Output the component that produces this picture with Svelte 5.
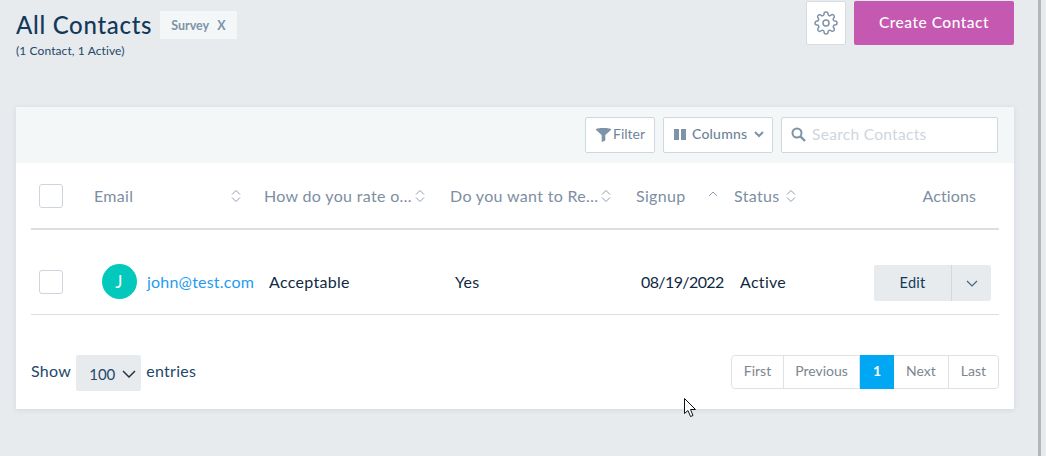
<script>
  const sortCols = [
    { label: 'Email', cls: 'c-email' },
    { label: 'How do you rate o…', cls: 'c-q' },
    { label: 'Do you want to Re…', cls: 'c-q' }
  ];
</script>

{#snippet sort()}
  <svg class="sort" width="10" height="14" viewBox="0 0 10 14" fill="none" stroke="#8e9db0" stroke-width="1">
    <path d="M1 5.500 5 1.500l4 4M1 8.500l4 4 4-4" />
  </svg>
{/snippet}

<div class="page">
  <main class="main">
    <header class="head">
      <div class="title-block">
        <div class="title-row">
          <h1>All Contacts</h1>
          <span class="tag"><span>Survey</span><span>X</span></span>
        </div>
        <p class="count">(1 Contact, 1 Active)</p>
      </div>
      <div class="head-actions">
        <button class="gear" aria-label="Settings">
          <svg width="24" height="24" viewBox="0 0 24 24" fill="none" stroke="#7d93a8" stroke-width="1.500" stroke-linejoin="round">
            <circle cx="12" cy="12" r="3" />
            <path d="M19.400 15a1.650 1.650 0 0 0 .33 1.820l.06.06a2 2 0 0 1 0 2.830 2 2 0 0 1-2.830 0l-.06-.06a1.650 1.650 0 0 0-1.820-.33 1.650 1.650 0 0 0-1 1.510V21a2 2 0 0 1-2 2 2 2 0 0 1-2-2v-.09A1.650 1.650 0 0 0 9 19.400a1.650 1.650 0 0 0-1.820.33l-.06.06a2 2 0 0 1-2.830 0 2 2 0 0 1 0-2.830l.06-.06a1.650 1.650 0 0 0 .33-1.820 1.650 1.650 0 0 0-1.510-1H3a2 2 0 0 1-2-2 2 2 0 0 1 2-2h.09A1.650 1.650 0 0 0 4.600 9a1.650 1.650 0 0 0-.33-1.820l-.06-.06a2 2 0 0 1 0-2.830 2 2 0 0 1 2.830 0l.06.06a1.650 1.650 0 0 0 1.820.33H9a1.650 1.650 0 0 0 1-1.510V3a2 2 0 0 1 2-2 2 2 0 0 1 2 2v.09a1.650 1.650 0 0 0 1 1.510 1.650 1.650 0 0 0 1.820-.33l.06-.06a2 2 0 0 1 2.830 0 2 2 0 0 1 0 2.830l-.06.06a1.650 1.650 0 0 0-.33 1.820V9a1.650 1.650 0 0 0 1.510 1H21a2 2 0 0 1 2 2 2 2 0 0 1-2 2h-.09a1.650 1.650 0 0 0-1.510 1z" />
          </svg>
        </button>
        <button class="create">Create Contact</button>
      </div>
    </header>

    <section class="card">
      <div class="toolbar">
        <button class="tool filter">
          <svg width="15" height="14" viewBox="0 0 15 14" fill="#7d93a8"><path d="M0 1.500C0 .5 3 0 7.500 0S15 .5 15 1.500c0 .6-.6 1-1.200 1.400L9.300 7v5.500L5.700 14V7L1.200 2.900C.6 2.500 0 2.100 0 1.500z"/></svg>
          <span>Filter</span>
        </button>
        <button class="tool columns">
          <svg width="12" height="11" viewBox="0 0 12 11" fill="#7d93a8"><rect width="5" height="11"/><rect x="7" width="5" height="11"/></svg>
          <span>Columns</span>
          <svg width="10" height="7" viewBox="0 0 10 7" fill="none" stroke="#7d93a8" stroke-width="2"><path d="M1 1l4 4 4-4"/></svg>
        </button>
        <label class="search">
          <svg width="15" height="15" viewBox="0 0 15 15" fill="none" stroke="#7d93a8" stroke-width="2"><circle cx="6" cy="6" r="4.500"/><path d="M9.500 9.500 14 14" stroke-width="2.400"/></svg>
          <input placeholder="Search Contacts" />
        </label>
      </div>

      <div class="table">
        <div class="row header">
          <div class="cell check-cell"><span class="check"></span></div>
          {#each sortCols as c}
            <div class="cell th {c.cls}"><span class="th-label">{c.label}</span>{@render sort()}</div>
          {/each}
          <div class="cell th c-signup">
            <span class="th-label">Signup</span>
            <svg class="sort" width="10" height="6" viewBox="0 0 10 6" fill="none" stroke="#8e9db0"><path d="M1 5 5 1l4 4"/></svg>
          </div>
          <div class="cell th c-status"><span class="th-label">Status</span>{@render sort()}</div>
          <div class="cell th c-actions"><span class="th-label">Actions</span></div>
        </div>

        <div class="row body">
          <div class="cell check-cell"><span class="check"></span></div>
          <div class="cell td c-user">
            <span class="avatar">J</span>
            <a href="#top" class="mail">john@test.com</a>
          </div>
          <div class="cell td">Acceptable</div>
          <div class="cell td">Yes</div>
          <div class="cell td date">08/19/2022</div>
          <div class="cell td status">Active</div>
          <div class="cell td act">
            <div class="split">
              <button class="edit">Edit</button>
              <button class="more" aria-label="More">
                <svg width="12" height="7" viewBox="0 0 12 7" fill="none" stroke="#3d6688" stroke-width="1.200"><path d="M1 1l5 5 5-5"/></svg>
              </button>
            </div>
          </div>
        </div>
      </div>

      <footer class="foot">
        <div class="entries">
          <span class="lbl">Show</span>
          <span class="select">100
            <svg width="14" height="8" viewBox="0 0 14 8" fill="none" stroke="#2a3440" stroke-width="1.500"><path d="M1 1l6 6 6-6"/></svg>
          </span>
          <span class="lbl">entries</span>
        </div>
        <nav class="pager">
          <span class="pg">First</span>
          <span class="pg">Previous</span>
          <span class="pg on">1</span>
          <span class="pg">Next</span>
          <span class="pg">Last</span>
        </nav>
      </footer>
    </section>
    <svg class="cursor" width="13" height="20" viewBox="0 0 13 20"><path d="M.5.5v15l3.500-3 2.500 6 2.500-1-2.500-6h5z" fill="#fff" stroke="#111"/></svg>
  </main>
  <div class="scrollbar"></div>
</div>

<style>
  :global(body) { margin: 0; background: #e7ebee; }
  .page {
    display: flex; width: 1046px; height: 456px; overflow: hidden;
    font-family: Lato, "Open Sans", sans-serif; color: #0e2a47;
  }
  .main { position: relative; width: 1038px; flex: none; padding: 0 24px 0 16px; box-sizing: border-box; }
  .scrollbar { flex: 1; border-left: 3px solid #b1b6ba; background: #e7ebee; }
  button { font-family: inherit; cursor: pointer; }

  .head { display: flex; justify-content: space-between; height: 107px; }
  .title-block { padding-top: 11px; }
  .title-row { display: flex; align-items: flex-start; gap: 8px; }
  h1 { margin: 0; font-size: 24px; line-height: 28px; font-weight: 500; color: #12395b; letter-spacing: .7px; }
  .tag {
    display: flex; gap: 8px; align-items: center; height: 28px; padding: 0 11px;
    background: #f4f7f8; color: #7d93a8; font-size: 12.500px; font-weight: 700; box-sizing: border-box;
  }
  .count { margin: 4px 0 0; font-size: 12px; line-height: 15px; color: #24476a; letter-spacing: .1px; }
  .head-actions { display: flex; gap: 8px; padding-top: 1px; align-items: flex-start; }
  .gear {
    display: grid; place-items: center; width: 40px; height: 44px; padding: 0; margin-top: 0;
    background: #fff; border: 1px solid #d5dde3; border-radius: 2px;
  }
  .create {
    width: 160px; height: 44px; background: #c558b0; border: 0; border-radius: 2px;
    color: #fff; font-size: 15.500px; font-weight: 500; letter-spacing: .5px; padding: 0 0 2px;
  }

  .card { background: #fff; height: 302px; box-shadow: 0 1px 5px rgba(60,80,100,.12); }
  .toolbar {
    display: flex; justify-content: flex-end; align-items: center; gap: 8px;
    height: 56px; padding: 0 16px 1px 0; box-sizing: border-box; background: #f4f7f8;
  }
  .tool {
    display: flex; align-items: center; height: 36px; background: #fff;
    border: 1px solid #cfd8e0; border-radius: 2px; color: #6f8499;
    font-size: 14px; font-weight: 400; box-sizing: border-box; padding: 0 0 2px;
  }
  .tool svg { margin-top: 2px; }
  .filter { width: 70px; padding-left: 10px; gap: 2px; }
  .columns { width: 110px; padding-left: 10px; gap: 6px; font-weight: 500; }
  .columns span { margin-right: 1px; letter-spacing: .2px; }
  .search {
    display: flex; align-items: center; gap: 6px; width: 217px; height: 36px; padding-left: 9px;
    box-sizing: border-box; background: #fff; border: 1px solid #cfd8e0; border-radius: 2px;
  }
  input {
    flex: 1; min-width: 0; border: 0; outline: 0; padding: 0 0 2px; background: none;
    font-family: inherit; font-size: 15.500px; letter-spacing: .3px;
  }
  input::placeholder { color: #ced6de; opacity: 1; }

  .table { margin: 0 15px; }
  .row { display: grid; grid-template-columns: 55px 170px 186px 186px 98px 100px 1fr; align-items: center; }
  .header { height: 67px; border-bottom: 2px solid #dcdfe1; box-sizing: border-box; }
  .body { height: 85px; border-bottom: 1px solid #dcdfe1; box-sizing: border-box; padding-top: 34px; align-items: start; }
  .cell { min-width: 0; display: flex; align-items: center; }
  .check-cell { padding-left: 8px; }
  .check { width: 24px; height: 24px; box-sizing: border-box; border: 1px solid #ccd4de; border-radius: 3px; background: #fff; }
  .body .check-cell { padding-top: 6px; }
  .th { padding-left: 8px; color: #7d8ea2; font-size: 16px; letter-spacing: .33px; justify-content: flex-start; }
  .th-label { white-space: nowrap; }
  .sort { flex: none; }
  .c-email { width: 147px; justify-content: space-between; }
  .c-q { gap: 3px; }
  .c-signup { gap: 22px; }
  .c-signup .sort { margin-top: -3px; }
  .c-status { gap: 7px; }
  .c-actions { justify-content: flex-end; padding-right: 23px; letter-spacing: .1px; }
  .td { height: 35px; padding-left: 13px; font-size: 16px; color: #0f2a44; letter-spacing: .3px; white-space: nowrap; }
  .date { letter-spacing: -.6px; }
  .status { padding-left: 14px; }
  .c-user { padding-left: 16px; gap: 10px; }
  .avatar {
    display: grid; place-items: center; width: 35px; height: 35px; flex: none;
    border-radius: 50%; background: #02c9bc; color: #fff; font-size: 17px; padding-right: 1px; box-sizing: border-box;
  }
  .mail { color: #1f9cf0; text-decoration: none; white-space: nowrap; letter-spacing: .2px; }
  .act { justify-content: flex-end; padding-right: 8px; height: 36px; margin-top: 1px; }
  .split { display: flex; width: 117px; height: 36px; background: #e7ebee; border-radius: 2px; }
  .split button { border: 0; background: none; padding: 0; }
  .edit { width: 78px; color: #12395b; font-size: 14.500px; font-weight: 400; border-right: 1px solid #d2d8dd !important; letter-spacing: .25px; padding-bottom: 2px !important; }
  .more { flex: 1; display: grid; place-items: center; }

  .foot { display: flex; justify-content: space-between; align-items: flex-start; margin: 0 15px; padding-top: 40px; }
  .entries { display: flex; align-items: center; gap: 5px; height: 36px; color: #24476a; font-size: 16px; letter-spacing: .3px; }
  .lbl { padding-bottom: 5px; }
  .select {
    display: flex; align-items: center; gap: 7px; width: 65px; height: 36px; box-sizing: border-box; padding: 2px 0 0 13px;
    background: #e7ebee; border-radius: 2px; font-size: 15px; letter-spacing: 0; color: #24476a;
  }
  .pager { display: flex; height: 34px; border: 1px solid #dfe2e4; border-radius: 4px; box-sizing: border-box; font-size: 14px; color: #7d8690; }
  .pg { display: grid; place-items: center; padding: 0 12px 3px; border-right: 1px solid #dfe2e4; }
  .pg:nth-child(2) { padding-inline: 11px; }
  .pg:last-child { border-right: 0; }
  .on { margin: -1px 0; background: #00a8f3; color: #fff; font-weight: 700; border-right: 0; padding: 0 13px 3px; }
  .cursor { position: absolute; left: 684px; top: 398px; }
</style>
